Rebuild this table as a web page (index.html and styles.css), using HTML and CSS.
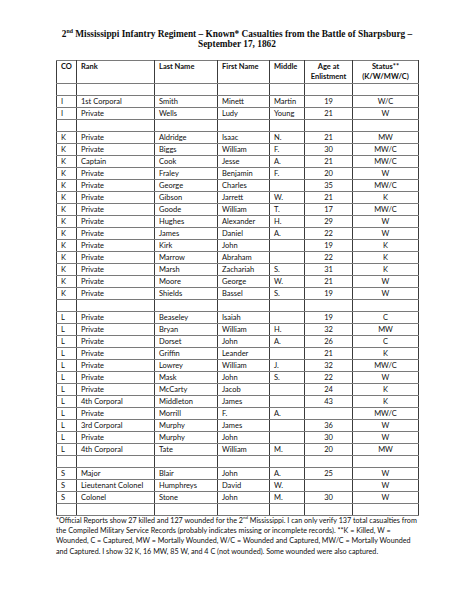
FILE: index.html
```html
<!DOCTYPE html>
<html>
<head>
<meta charset="utf-8">
<link rel="stylesheet" href="styles.css">
</head>
<body>
<div class="page">
  <h1 class="title">2<sup>nd</sup> Mississippi Infantry Regiment – Known* Casualties from the Battle of Sharpsburg –<br>September 17, 1862</h1>
  <div class="body">
  <table class="roster">
    <colgroup>
      <col class="c-co"><col class="c-rank"><col class="c-last"><col class="c-first"><col class="c-mid"><col class="c-age"><col class="c-stat">
    </colgroup>
    <thead>
      <tr class="head"><th>CO</th><th>Rank</th><th>Last Name</th><th>First Name</th><th>Middle</th><th class="ctr">Age at<br>Enlistment</th><th class="ctr">Status**<br>(K/W/MW/C)</th></tr>
    </thead>
    <tbody>
      <tr><td></td><td></td><td></td><td></td><td></td><td></td><td></td></tr>
      <tr><td>I</td><td>1st Corporal</td><td>Smith</td><td>Minett</td><td>Martin</td><td class="ctr">19</td><td class="ctr">W/C</td></tr>
      <tr><td>I</td><td>Private</td><td>Wells</td><td>Ludy</td><td>Young</td><td class="ctr">21</td><td class="ctr">W</td></tr>
      <tr><td></td><td></td><td></td><td></td><td></td><td></td><td></td></tr>
      <tr><td>K</td><td>Private</td><td>Aldridge</td><td>Isaac</td><td>N.</td><td class="ctr">21</td><td class="ctr">MW</td></tr>
      <tr><td>K</td><td>Private</td><td>Biggs</td><td>William</td><td>F.</td><td class="ctr">30</td><td class="ctr">MW/C</td></tr>
      <tr><td>K</td><td>Captain</td><td>Cook</td><td>Jesse</td><td>A.</td><td class="ctr">21</td><td class="ctr">MW/C</td></tr>
      <tr><td>K</td><td>Private</td><td>Fraley</td><td>Benjamin</td><td>F.</td><td class="ctr">20</td><td class="ctr">W</td></tr>
      <tr><td>K</td><td>Private</td><td>George</td><td>Charles</td><td></td><td class="ctr">35</td><td class="ctr">MW/C</td></tr>
      <tr><td>K</td><td>Private</td><td>Gibson</td><td>Jarrett</td><td>W.</td><td class="ctr">21</td><td class="ctr">K</td></tr>
      <tr><td>K</td><td>Private</td><td>Goode</td><td>William</td><td>T.</td><td class="ctr">17</td><td class="ctr">MW/C</td></tr>
      <tr><td>K</td><td>Private</td><td>Hughes</td><td>Alexander</td><td>H.</td><td class="ctr">29</td><td class="ctr">W</td></tr>
      <tr><td>K</td><td>Private</td><td>James</td><td>Daniel</td><td>A.</td><td class="ctr">22</td><td class="ctr">W</td></tr>
      <tr><td>K</td><td>Private</td><td>Kirk</td><td>John</td><td></td><td class="ctr">19</td><td class="ctr">K</td></tr>
      <tr><td>K</td><td>Private</td><td>Marrow</td><td>Abraham</td><td></td><td class="ctr">22</td><td class="ctr">K</td></tr>
      <tr><td>K</td><td>Private</td><td>Marsh</td><td>Zachariah</td><td>S.</td><td class="ctr">31</td><td class="ctr">K</td></tr>
      <tr><td>K</td><td>Private</td><td>Moore</td><td>George</td><td>W.</td><td class="ctr">21</td><td class="ctr">W</td></tr>
      <tr><td>K</td><td>Private</td><td>Shields</td><td>Bassel</td><td>S.</td><td class="ctr">19</td><td class="ctr">W</td></tr>
      <tr><td></td><td></td><td></td><td></td><td></td><td></td><td></td></tr>
      <tr><td>L</td><td>Private</td><td>Beaseley</td><td>Isaiah</td><td></td><td class="ctr">19</td><td class="ctr">C</td></tr>
      <tr><td>L</td><td>Private</td><td>Bryan</td><td>William</td><td>H.</td><td class="ctr">32</td><td class="ctr">MW</td></tr>
      <tr><td>L</td><td>Private</td><td>Dorset</td><td>John</td><td>A.</td><td class="ctr">26</td><td class="ctr">C</td></tr>
      <tr><td>L</td><td>Private</td><td>Griffin</td><td>Leander</td><td></td><td class="ctr">21</td><td class="ctr">K</td></tr>
      <tr><td>L</td><td>Private</td><td>Lowrey</td><td>William</td><td>J.</td><td class="ctr">32</td><td class="ctr">MW/C</td></tr>
      <tr><td>L</td><td>Private</td><td>Mask</td><td>John</td><td>S.</td><td class="ctr">22</td><td class="ctr">W</td></tr>
      <tr><td>L</td><td>Private</td><td>McCarty</td><td>Jacob</td><td></td><td class="ctr">24</td><td class="ctr">K</td></tr>
      <tr><td>L</td><td>4th Corporal</td><td>Middleton</td><td>James</td><td></td><td class="ctr">43</td><td class="ctr">K</td></tr>
      <tr><td>L</td><td>Private</td><td>Morrill</td><td>F.</td><td>A.</td><td class="ctr"></td><td class="ctr">MW/C</td></tr>
      <tr><td>L</td><td>3rd Corporal</td><td>Murphy</td><td>James</td><td></td><td class="ctr">36</td><td class="ctr">W</td></tr>
      <tr><td>L</td><td>Private</td><td>Murphy</td><td>John</td><td></td><td class="ctr">30</td><td class="ctr">W</td></tr>
      <tr><td>L</td><td>4th Corporal</td><td>Tate</td><td>William</td><td>M.</td><td class="ctr">20</td><td class="ctr">MW</td></tr>
      <tr><td></td><td></td><td></td><td></td><td></td><td></td><td></td></tr>
      <tr><td>S</td><td>Major</td><td>Blair</td><td>John</td><td>A.</td><td class="ctr">25</td><td class="ctr">W</td></tr>
      <tr><td>S</td><td>Lieutenant Colonel</td><td>Humphreys</td><td>David</td><td>W.</td><td class="ctr"></td><td class="ctr">W</td></tr>
      <tr><td>S</td><td>Colonel</td><td>Stone</td><td>John</td><td>M.</td><td class="ctr">30</td><td class="ctr">W</td></tr>
      <tr><td></td><td></td><td></td><td></td><td></td><td></td><td></td></tr>
    </tbody>
  </table>
  <p class="note">*Official Reports show 27 killed and 127 wounded for the 2<sup>nd</sup> Mississippi. I can only verify 137 total casualties from the Compiled Military Service Records (probably indicates missing or incomplete records). **K = Killed, W = Wounded, C = Captured, MW = Mortally Wounded, W/C = Wounded and Captured, MW/C = Mortally Wounded and Captured. I show 32 K, 16 MW, 85 W, and 4 C (not wounded). Some wounded were also captured.</p>
  </div>
</div>
</body>
</html>
```

FILE: styles.css
```css
html, body {
  margin: 0;
  padding: 0;
  background: #ffffff;
}
.page {
  width: 474px;
  padding-top: 29px;
  box-sizing: border-box;
  color: #111;
}
.title {
  margin: 0;
  font-family: "Liberation Serif", "Times New Roman", serif;
  font-weight: bold;
  font-size: 9.35px;
  line-height: 10.4px;
  text-align: center;
  white-space: nowrap;
  color: #0d0d0d;
}
.title sup {
  font-size: 5.8px;
  line-height: 1;
  vertical-align: top;
}
.body {
  padding-left: 56px;
}
.roster {
  margin-top: 10px;
  width: 362px;
  table-layout: fixed;
  border-collapse: collapse;
  font-family: Lato, "Liberation Sans", sans-serif;
  font-size: 7.5px;
  color: #0f0f0f;
}
.c-co { width: 20px; }
.c-rank { width: 78px; }
.c-last { width: 63px; }
.c-first { width: 52px; }
.c-mid { width: 35px; }
.c-age { width: 48px; }
.c-stat { width: 66px; }
.roster th, .roster td {
  border-top: 1px solid #7a7a7a;
  border-bottom: 1px solid #7a7a7a;
  border-left: 1px solid #3c3c3c;
  border-right: 1px solid #3c3c3c;
  padding: 0 0 0 4px;
  text-align: left;
  white-space: nowrap;
  overflow: hidden;
}
.roster th {
  height: 20px;
  vertical-align: top;
  font-weight: bold;
  line-height: 10.4px;
  padding-top: 1px;
}
.roster td {
  height: 11px;
  line-height: 11px;
  vertical-align: middle;
}
.roster .ctr {
  text-align: center;
  padding-left: 0;
}
.note {
  width: 361px;
  margin: 0;
  font-family: Lato, "Liberation Sans", sans-serif;
  font-size: 7.2px;
  line-height: 10.3px;
  color: #0f0f0f;
}
.note sup {
  font-size: 4.4px;
  line-height: 1;
  vertical-align: top;
}
```
